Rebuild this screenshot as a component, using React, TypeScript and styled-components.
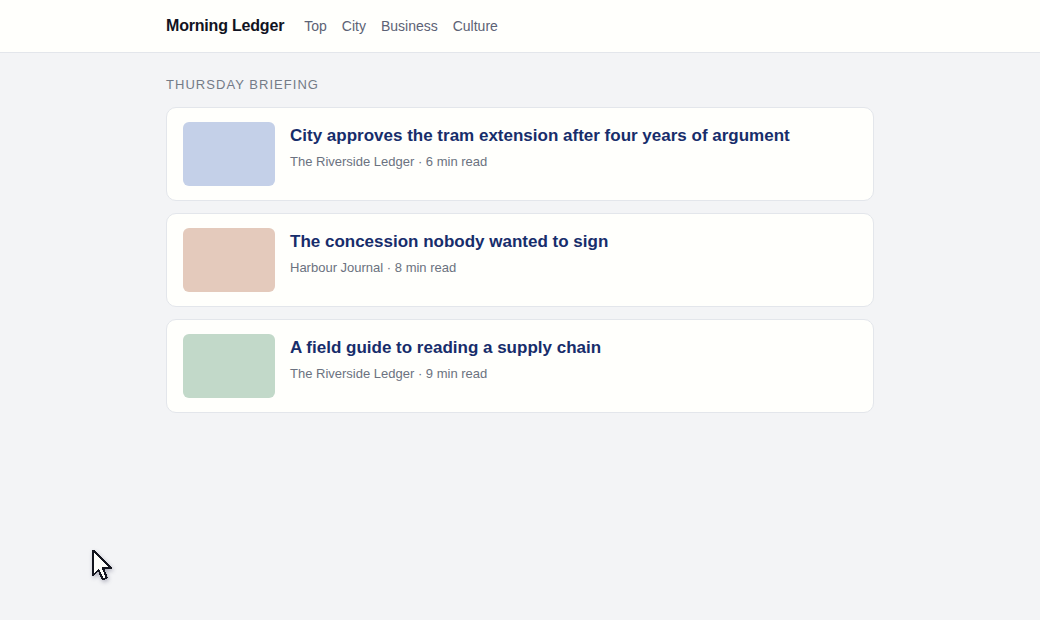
import React from "react";
import styled, { createGlobalStyle } from "styled-components";

const GlobalStyle = createGlobalStyle`
  *, *::before, *::after { box-sizing: border-box; }
  body {
    margin: 0;
    background: #f3f4f6;
    color: #111322;
    font-family: "Liberation Sans", Arial, sans-serif;
    font-size: 14px;
  }
`;

const Header = styled.header`
  background: #fffffc;
  border-bottom: 1px solid #e3e6eb;
`;

const Container = styled.div`
  max-width: 740px;
  margin: 0 auto;
  padding: 0 16px;
`;

const HeaderRow = styled(Container)`
  display: flex;
  align-items: center;
  gap: 20px;
  height: 52px;
`;

const Brand = styled.span`
  font-size: 16px;
  font-weight: 700;
  letter-spacing: -0.012em;
`;

const Nav = styled.nav`
  display: flex;
  gap: 15px;
`;

const NavLink = styled.a`
  color: #5c6275;
  font-size: 14px;
  text-decoration: none;
`;

const Main = styled(Container).attrs({ as: "main" })`
  padding-top: 24px;
  padding-bottom: 24px;
`;

const SectionTitle = styled.h1`
  margin: 0 0 14px;
  color: #747b87;
  font-size: 13px;
  font-weight: 400;
  line-height: 16px;
  letter-spacing: 0.08em;
  text-transform: uppercase;
`;

const StoryList = styled.div`
  display: grid;
  gap: 12px;
`;

const Story = styled.article`
  display: flex;
  gap: 15px;
  padding: 14px 16px;
  background: #fffffc;
  border: 1px solid #e3e6eb;
  border-radius: 10px;
`;

const Thumbnail = styled.div<{ $color: string }>`
  flex: none;
  width: 92px;
  height: 64px;
  border-radius: 6px;
  background: ${({ $color }) => $color};
`;

const StoryTitle = styled.h2`
  margin: 3px 0 6px;
  font-size: 17px;
  line-height: 22px;
`;

const StoryLink = styled.a`
  color: #172d6b;
  text-decoration: none;
`;

const Meta = styled.p`
  margin: 0;
  color: #6b7280;
  font-size: 13px;
  line-height: 18px;
`;

const Pointer = styled.svg`
  position: fixed;
  left: 90px;
  top: 547px;
  pointer-events: none;
  filter: drop-shadow(1px 2px 2px rgba(20, 20, 60, 0.3));
`;

const sections = ["Top", "City", "Business", "Culture"];

const stories = [
  { title: "City approves the tram extension after four years of argument", source: "The Riverside Ledger", minutes: 6, color: "#c4d0e8" },
  { title: "The concession nobody wanted to sign", source: "Harbour Journal", minutes: 8, color: "#e4cabc" },
  { title: "A field guide to reading a supply chain", source: "The Riverside Ledger", minutes: 9, color: "#c2d9c9" },
];

export default function App() {
  return (
    <>
      <GlobalStyle />
      <Header>
        <HeaderRow>
          <Brand>Morning Ledger</Brand>
          <Nav aria-label="Sections">
            {sections.map((name) => (
              <NavLink key={name} href="#">{name}</NavLink>
            ))}
          </Nav>
        </HeaderRow>
      </Header>
      <Main>
        <SectionTitle>Thursday briefing</SectionTitle>
        <StoryList>
          {stories.map(({ title, source, minutes, color }) => (
            <Story key={title}>
              <Thumbnail $color={color} />
              <div>
                <StoryTitle><StoryLink href="#">{title}</StoryLink></StoryTitle>
                <Meta>{source} · {minutes} min read</Meta>
              </div>
            </Story>
          ))}
        </StoryList>
      </Main>
      <Pointer width="26" height="36" viewBox="0 0 26 36" aria-hidden="true">
        <path
          d="M3 3.4V28.4L8.5 23L12.9 32.4L16.8 30.6L12.9 21H20.8Z"
          fill="#fffffc"
          stroke="#14161f"
          strokeWidth="2"
          strokeLinejoin="round"
          shapeRendering="crispEdges"
        />
      </Pointer>
    </>
  );
}
